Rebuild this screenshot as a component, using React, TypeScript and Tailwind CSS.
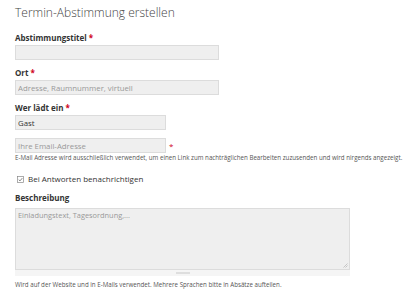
import React from "react";

const Req = () => <span className="text-[#d0021b] ml-[2px]">*</span>;

const Label = ({ text, req = true }: { text: string; req?: boolean }) => (
  <label className="block h-[12px] text-[8px] leading-[12px] font-bold text-[#333]">
    {text}
    {req && <Req />}
  </label>
);

const inputCls =
  "block h-[15px] px-[2px] bg-[#efefef] border border-[#dcdcdc] text-[7.8px] leading-[13px] text-[#333] placeholder:text-[#999] outline-none";

const App = () => {
  return (
    <div className="w-[420px] h-[293px] bg-white px-[15px] overflow-hidden font-['Open_Sans',sans-serif]">
      <h1 className="mt-[4px] h-[18px] text-[12px] leading-[18px] font-light text-[#444]">
        Termin-Abstimmung erstellen
      </h1>

      <div className="mt-[10px]">
        <Label text="Abstimmungstitel" />
        <input className={`${inputCls} mt-[1px] w-[204px]`} />
      </div>

      <div className="mt-[7px]">
        <Label text="Ort" />
        <input className={`${inputCls} mt-[1px] w-[204px]`} placeholder="Adresse, Raumnummer, virtuell" />
      </div>

      <div className="mt-[7px]">
        <Label text="Wer lädt ein" />
        <input className={`${inputCls} mt-[1px] w-[151px]`} defaultValue="Gast" />
        <div className="mt-[8px] flex items-center">
          <input className={`${inputCls} w-[151px]`} placeholder="Ihre Email-Adresse" />
          <span className="ml-[3px] text-[8px] leading-[8px] text-[#d0021b]">*</span>
        </div>
        <p className="mt-[1px] whitespace-nowrap text-[6.2px] leading-[8px] text-[#555]">
          E-Mail Adresse wird ausschließlich verwendet, um einen Link zum nachträglichen Bearbeiten zuzusenden und wird nirgends angezeigt.
        </p>
      </div>

      <label className="mt-[11px] flex items-center h-[12px] gap-[4px] text-[8px] text-[#333]">
        <svg width="7" height="7" viewBox="0 0 7 7" className="ml-[2px]">
          <rect x="0.5" y="0.5" width="6" height="6" fill="#fff" stroke="#888" strokeWidth="0.7" />
          <path d="M1.7 3.6 L3 4.9 L5.3 2.1" fill="none" stroke="#555" strokeWidth="0.7" />
        </svg>
        Bei Antworten benachrichtigen
      </label>

      <div className="mt-[7px]">
        <Label text="Beschreibung" req={false} />
        <div className="mt-[4px] w-[335px]">
          <div className="relative h-[62px] bg-[#efefef] border border-[#dcdcdc]">
            <textarea
              className="w-full h-full resize-none bg-transparent px-[2px] py-[1px] text-[7.4px] leading-[10px] text-[#333] placeholder:text-[#999] outline-none"
              placeholder="Einladungstext, Tagesordnung,..."
            />
            <svg width="5" height="5" viewBox="0 0 5 5" className="absolute right-[1px] bottom-[1px]">
              <path d="M4.5 0.5 L0.5 4.5 M4.5 2.5 L2.5 4.5" stroke="#aaa" strokeWidth="0.6" />
            </svg>
          </div>
          <div className="h-[6px] bg-[#f5f5f5] flex justify-center items-center">
            <div className="w-[14px] h-[2px] bg-[#dedede]" />
          </div>
        </div>
        <p className="mt-[5px] whitespace-nowrap text-[6.2px] leading-[8px] text-[#555]">
          Wird auf der Website und in E-Mails verwendet. Mehrere Sprachen bitte in Absätze aufteilen.
        </p>
      </div>
    </div>
  );
};

export default App;
